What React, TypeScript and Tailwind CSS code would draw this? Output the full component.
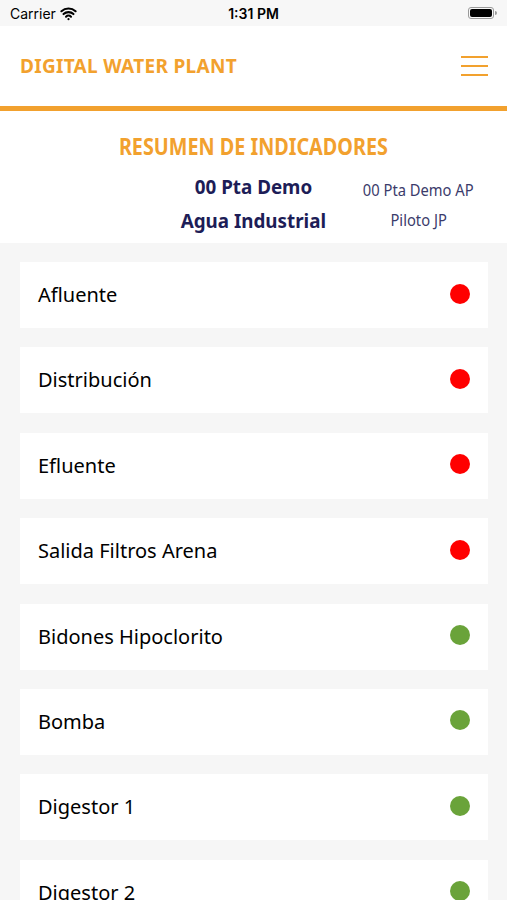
import { Wifi } from 'lucide-react';

type Item = { name: string; ok: boolean };

const items: Item[] = [
  { name: 'Afluente', ok: false },
  { name: 'Distribución', ok: false },
  { name: 'Efluente', ok: false },
  { name: 'Salida Filtros Arena', ok: false },
  { name: 'Bidones Hipoclorito', ok: true },
  { name: 'Bomba', ok: true },
  { name: 'Digestor 1', ok: true },
  { name: 'Digestor 2', ok: true },
];

function StatusBar() {
  return (
    <div className="flex h-[26px] items-center justify-between bg-[#f7f7f7] px-[10px] font-['Inter',sans-serif] text-[14px] text-black">
      <div className="flex w-[120px] items-center gap-[4px]">
        <span>Carrier</span>
        <Wifi className="h-[17px] w-[17px]" strokeWidth={3} />
      </div>
      <span className="font-semibold">1:31 PM</span>
      <div className="flex w-[120px] justify-end">
        <div className="flex items-center">
          <div className="h-[12px] w-[26px] rounded-[3px] border border-[#9a9a9a] p-[1px]">
            <div className="h-full w-full rounded-[2px] bg-black" />
          </div>
          <div className="ml-[1px] h-[4px] w-[2px] rounded-r bg-[#9a9a9a]" />
        </div>
      </div>
    </div>
  );
}

function Header() {
  return (
    <div className="bg-white">
      <div className="flex h-[80px] items-center justify-between pl-[20px] pr-[19px]">
        <span className="font-['Noto_Sans',sans-serif] text-[19px] font-bold tracking-[0.3px] text-[#f2a12e]">
          DIGITAL WATER PLANT
        </span>
        <div className="flex w-[27px] flex-col gap-[7px]">
          <span className="h-[2px] bg-[#f2a12e]" />
          <span className="h-[2px] bg-[#f2a12e]" />
          <span className="h-[2px] bg-[#f2a12e]" />
        </div>
      </div>
      <div className="h-[5px] bg-[#f2a12e]" />
    </div>
  );
}

function Summary() {
  return (
    <div className="bg-white pb-[5px] pt-[20px] font-['Noto_Sans',sans-serif]">
      <div className="flex justify-center">
        <h1 className="scale-x-[0.86] whitespace-nowrap text-[23px] font-bold leading-[30px] text-[#f2a12e]">
          RESUMEN DE INDICADORES
        </h1>
      </div>
      <div className="mt-[9px] grid grid-cols-3">
        <div />
        <div className="flex flex-col items-center text-[20px] font-bold leading-[34px] text-[#1d1d57]">
          <div className="scale-x-[0.94] whitespace-nowrap">00 Pta Demo</div>
          <div className="scale-x-[0.94] whitespace-nowrap">Agua Industrial</div>
        </div>
        <div className="flex flex-col items-center pr-[8px] pt-[5px] text-[16px] leading-[30px] text-[#3b3b6b]">
          <div className="scale-x-[0.92] whitespace-nowrap">00 Pta Demo AP</div>
          <div className="scale-x-[0.92] whitespace-nowrap">Piloto JP</div>
        </div>
      </div>
    </div>
  );
}

function Row({ item }: { item: Item }) {
  return (
    <div className="flex h-[66px] items-center justify-between bg-white pl-[18px] pr-[18px]">
      <span className="font-['Noto_Sans',sans-serif] text-[20px] text-black">{item.name}</span>
      <span className={`mb-[3px] h-[20px] w-[20px] rounded-full ${item.ok ? 'bg-[#6aa33a]' : 'bg-[#ff0000]'}`} />
    </div>
  );
}

export default function App() {
  return (
    <div className="h-[900px] overflow-hidden bg-[#f6f6f6]">
      <StatusBar />
      <Header />
      <Summary />
      <div className="flex flex-col gap-[19.4px] pl-[20px] pr-[19px] pt-[19px]">
        {items.map((it) => (
          <Row key={it.name} item={it} />
        ))}
      </div>
    </div>
  );
}
